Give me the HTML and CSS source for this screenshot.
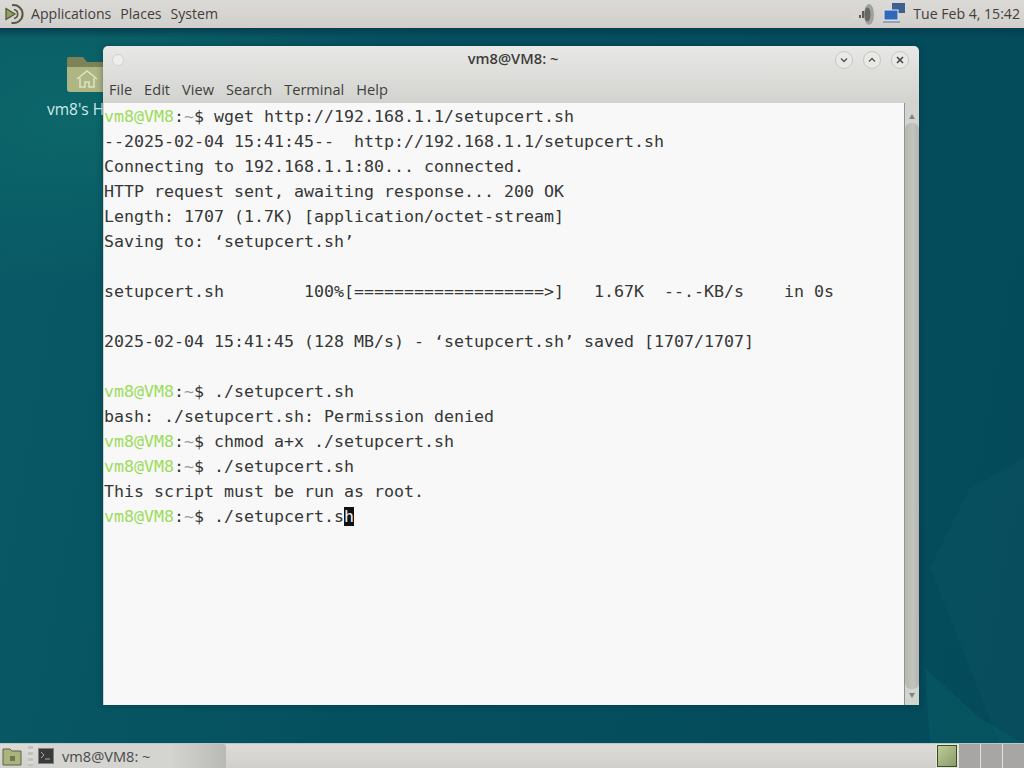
FILE: index.html
```html
<!DOCTYPE html>
<html lang="en">
<head>
<meta charset="utf-8">
<title>vm8@VM8: ~</title>
<link rel="stylesheet" href="styles.css">
</head>
<body>
<div class="screen">
  <header class="panel-top">
    <svg class="logo" width="22" height="22" viewBox="0 0 22 22">
      <path d="M9 2.2a9 9 0 1 1-.5 17.6" fill="none" stroke="#56583f" stroke-width="2"/>
      <path d="M11 6.5a4.6 4.6 0 0 1 0 9" fill="none" stroke="#56583f" stroke-width="1.6"/>
      <path d="M3 5.5 12 11l-9 5.5z" fill="#8fa25e" stroke="#4e5238" stroke-width="1.2"/>
    </svg>
    <nav class="menus">
      <span>Applications</span><span>Places</span><span>System</span>
    </nav>
    <div class="tray">
      <svg class="vol" width="24" height="24" viewBox="0 0 24 24">
        <path d="M1 7v10M4 8v8" stroke="#d9d9d3" stroke-width="1.5"/>
        <path d="M8 13v3M11 9v7" stroke="#5c5c5c" stroke-width="2"/>
        <ellipse cx="17" cy="12.5" rx="5" ry="10.5" fill="#a0a29f"/>
        <ellipse cx="15.5" cy="12.5" rx="3" ry="7" fill="#666866"/>
      </svg>
      <svg class="net" width="24" height="24" viewBox="0 0 24 24">
        <rect x="10" y="1" width="13" height="10" fill="#3f5f92"/>
        <rect x="2" y="8" width="14" height="10" fill="#3068bb" stroke="#dfe6ee"/>
        <rect x="1" y="19" width="17" height="2" fill="#93a2b5"/>
      </svg>
      <time class="clock">Tue Feb 4, 15:42</time>
    </div>
  </header>

  <main class="desktop">
    <svg class="wallpaper" width="1024" height="716" viewBox="0 0 1024 716" preserveAspectRatio="none">
      <path d="M970 460 1024 430V716H1000L930 540z" fill="#2a6d7c" opacity=".1"/>
      <path d="M925 640 980 690 1024 716H930z" fill="#0c7070" opacity=".25"/>
    </svg>
    <div class="top-shade"></div>

    <div class="desk-icon">
      <svg width="42" height="42" viewBox="0 0 42 42">
        <path d="M1 6q0-2 2-2h14l4 5h17q2 0 2 2v6H1z" fill="#7e8257"/>
        <path d="M1 14h40v22q0 3-3 3H4q-3 0-3-3z" fill="#aeb684"/>
        <path d="M11 26 21 18l10 8M14 25v9h5v-5h4v5h5v-9" fill="none" stroke="#dfe3c4" stroke-width="1.5"/>
      </svg>
      <span class="desk-label">vm8's Home</span>
    </div>

    <section class="window">
      <div class="titlebar">
        <span class="win-dot"></span>
        <h1 class="win-title">vm8@VM8: ~</h1>
        <div class="win-buttons">
          <span class="win-btn"><svg width="10" height="10" viewBox="0 0 10 10"><path d="M2 3.5 5 6.5 8 3.5" fill="none" stroke="#555" stroke-width="1.4"/></svg></span>
          <span class="win-btn"><svg width="10" height="10" viewBox="0 0 10 10"><path d="M2 6.5 5 3.5 8 6.5" fill="none" stroke="#555" stroke-width="1.4"/></svg></span>
          <span class="win-btn"><svg width="10" height="10" viewBox="0 0 10 10"><path d="M2 2 8 8M8 2 2 8" fill="none" stroke="#444" stroke-width="1.6"/></svg></span>
        </div>
      </div>
      <div class="menubar">
        <span>File</span><span>Edit</span><span>View</span><span>Search</span><span>Terminal</span><span>Help</span>
      </div>
      <div class="term-area">
<pre class="terminal"><span class="pr">vm8@VM8</span>:<span class="tilde">~</span>$ wget http://192.168.1.1/setupcert.sh
--2025-02-04 15:41:45--  http://192.168.1.1/setupcert.sh
Connecting to 192.168.1.1:80... connected.
HTTP request sent, awaiting response... 200 OK
Length: 1707 (1.7K) [application/octet-stream]
Saving to: ‘setupcert.sh’

setupcert.sh        100%[===================&gt;]   1.67K  --.-KB/s    in 0s

2025-02-04 15:41:45 (128 MB/s) - ‘setupcert.sh’ saved [1707/1707]

<span class="pr">vm8@VM8</span>:<span class="tilde">~</span>$ ./setupcert.sh
bash: ./setupcert.sh: Permission denied
<span class="pr">vm8@VM8</span>:<span class="tilde">~</span>$ chmod a+x ./setupcert.sh
<span class="pr">vm8@VM8</span>:<span class="tilde">~</span>$ ./setupcert.sh
This script must be run as root.
<span class="pr">vm8@VM8</span>:<span class="tilde">~</span>$ ./setupcert.s<span class="cursor">h</span></pre>
        <div class="scrollbar">
          <svg width="14" height="12" viewBox="0 0 14 12"><path d="M7 3 10 8H4z" fill="#7f857c"/></svg>
          <div class="thumb"></div>
          <svg width="14" height="12" viewBox="0 0 14 12"><path d="M7 9 10 4H4z" fill="#7f857c"/></svg>
        </div>
      </div>
    </section>
  </main>

  <footer class="panel-bottom">
    <svg class="show-desk" width="22" height="22" viewBox="0 0 22 22">
      <path d="M2 4h7l2 2h9v14H2z" fill="#a9b57c" stroke="#5d6344"/>
      <rect x="9" y="11" width="5" height="5" fill="#6f7650"/>
    </svg>
    <span class="grip"></span>
    <div class="task">
      <svg width="16" height="16" viewBox="0 0 16 16">
        <rect x=".5" y=".5" width="15" height="15" fill="#3a3a3a" stroke="#808080"/>
        <path d="M3 4l3 3-3 3" fill="none" stroke="#aaa"/>
        <path d="M7 11h5" stroke="#aaa"/>
      </svg>
      <span>vm8@VM8: ~</span>
    </div>
    <div class="pager">
      <span class="ws active"></span><span class="ws"></span><span class="ws"></span><span class="ws"></span>
    </div>
  </footer>
</div>
</body>
</html>
```

FILE: styles.css
```css
* { box-sizing: border-box; }
html, body { margin: 0; height: 100%; overflow: hidden; }
.screen {
  width: 1024px;
  height: 768px;
  display: flex;
  flex-direction: column;
  font-family: "Open Sans", "Noto Sans", sans-serif;
  color: #3f3f3c;
}
.panel-top {
  height: 28px;
  flex: none;
  display: flex;
  align-items: center;
  padding: 1px 4px 0 3px;
  background: linear-gradient(#dcdad7, #d2d0cd);
  border-bottom: 2px solid #d8c9cc;
  font-size: 14.1px;
}
.logo { flex: none; }
.menus { display: flex; gap: 9px; margin-left: 6px; }
.tray { margin-left: auto; display: flex; align-items: center; }
.vol { margin-right: 6px; }
.clock { margin-left: 7px; }

.desktop {
  position: relative;
  flex: 1;
  overflow: hidden;
  background:
    radial-gradient(ellipse 300px 170px at 80px 90px, rgba(14,110,108,.65) 0%, rgba(14,110,108,0) 100%),
    linear-gradient(100deg, #095a66 0%, #05505f 40%, #044a5b 100%);
}
.wallpaper { position: absolute; inset: 0; }
.top-shade {
  position: absolute;
  inset: 0 0 auto;
  height: 10px;
  background: linear-gradient(#043f4f, rgba(4,63,79,0));
}
.desk-icon {
  position: absolute;
  left: 47px;
  top: 25px;
  display: flex;
  flex-direction: column;
  align-items: flex-start;
  gap: 4px;
  font-size: 15.5px;
  line-height: 20px;
  color: #cfeaea;
}
.desk-icon svg { margin-left: 19px; }
.desk-label { white-space: nowrap; }

.window {
  position: absolute;
  left: 103px;
  top: 18px;
  width: 816px;
  height: 659px;
  display: flex;
  flex-direction: column;
  border-radius: 5px 5px 0 0;
  background: linear-gradient(#e8e9e6, #d1d1ce 60px);
  box-shadow: 0 0 6px rgba(0, 40, 50, .45);
}
.titlebar {
  height: 34px;
  flex: none;
  display: flex;
  align-items: center;
  position: relative;
  padding: 0 10px 7px 9px;
}
.win-dot {
  width: 12px;
  height: 12px;
  border-radius: 50%;
  background: #efefec;
  border: 1px solid #d2d2ce;
}
.win-title {
  position: absolute;
  left: 4px;
  right: 0;
  margin: 0;
  padding-bottom: 3px;
  text-align: center;
  font-size: 14.7px;
  font-weight: 600;
  color: #3d3d3a;
}
.win-buttons { margin-left: auto; display: flex; gap: 10px; position: relative; }
.win-btn {
  width: 18px;
  height: 18px;
  border-radius: 50%;
  display: flex;
  align-items: center;
  justify-content: center;
  background: #e9e9e6;
  border: 1px solid #c6c6c2;
}
.menubar {
  height: 23px;
  flex: none;
  display: flex;
  align-items: center;
  gap: 12px;
  padding: 0 0 6px 6px;
  font-size: 14.6px;
}
.term-area { flex: 1; display: flex; min-height: 0; }
.terminal {
  flex: 1;
  margin: 0;
  padding: 1px 0 0;
  background: #f8f8f8;
  border-left: 1px solid #cfd4d2;
  border-right: 1px solid #8f9492;
  color: #363636;
  font-family: "DejaVu Sans Mono", monospace;
  font-size: 16.63px;
  line-height: 25px;
  overflow: hidden;
}
.pr { color: #9cdc5c; }
.tilde { color: #9a9a9a; }
.cursor { background: #111; color: #f2f2f2; }
.scrollbar {
  width: 14px;
  flex: none;
  display: flex;
  flex-direction: column;
  align-items: center;
  padding: 8px 0 4px;
  background: #d2d4d0;
}
.thumb {
  flex: 1;
  width: 14px;
  border-radius: 6px;
  background: linear-gradient(90deg, #b4b9b0, #c0c4bc 60%, #bbafb3);
}

.panel-bottom {
  height: 25px;
  flex: none;
  display: flex;
  align-items: center;
  background: linear-gradient(#dcdbd8, #d1d0cd);
  border-top: 1px solid #bcc8c8;
  font-size: 14.6px;
}
.show-desk { margin-left: 1px; flex: none; }
.grip {
  width: 5px;
  height: 20px;
  margin: 0 5px 0 5px;
  background: repeating-linear-gradient(#c0c0bc 0 3px, #dadad7 3px 6px);
}
.task {
  width: 188px;
  height: 24px;
  display: flex;
  align-items: center;
  gap: 8px;
  border-radius: 3px 3px 0 0;
  background: linear-gradient(90deg, #d4d4d1 70%, #b9b9b6);
  color: #4a4a48;
}
.pager { margin-left: auto; display: flex; height: 24px; }
.ws {
  width: 22px;
  background: #a8a6a4;
  border-left: 1px solid #e0e0dd;
}
.ws.active {
  width: 22px;
  background: linear-gradient(135deg, #bfd09a, #88996a);
  border: 1px solid #e3e8d2;
  outline: 1px solid #3d4a2c;
  outline-offset: -2px;
}
```
